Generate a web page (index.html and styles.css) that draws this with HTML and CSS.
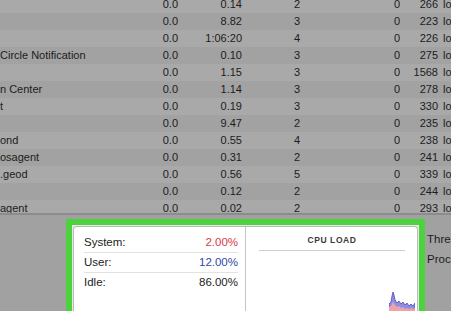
FILE: index.html
```html
<!DOCTYPE html>
<html lang="en">
<head>
  <meta charset="UTF-8" />
  <meta name="viewport" content="width=device-width, initial-scale=1.0" />
  <title>Activity Monitor</title>
  <link rel="stylesheet" href="styles.css">
</head>
<body>
  <div class="process-list">
    <div class="rows">
      <div class="row"><span class="name"></span><span class="cpu">0.0</span><span class="time">0.14</span><span class="threads">2</span><span class="wakes">0</span><span class="pid">266</span><span class="user">lo</span></div>
      <div class="row"><span class="name"></span><span class="cpu">0.0</span><span class="time">8.82</span><span class="threads">3</span><span class="wakes">0</span><span class="pid">223</span><span class="user">lo</span></div>
      <div class="row"><span class="name"></span><span class="cpu">0.0</span><span class="time">1:06:20</span><span class="threads">4</span><span class="wakes">0</span><span class="pid">226</span><span class="user">lo</span></div>
      <div class="row"><span class="name">Circle Notification</span><span class="cpu">0.0</span><span class="time">0.10</span><span class="threads">3</span><span class="wakes">0</span><span class="pid">275</span><span class="user">lo</span></div>
      <div class="row"><span class="name"></span><span class="cpu">0.0</span><span class="time">1.15</span><span class="threads">3</span><span class="wakes">0</span><span class="pid">1568</span><span class="user">lo</span></div>
      <div class="row"><span class="name">n Center</span><span class="cpu">0.0</span><span class="time">1.14</span><span class="threads">3</span><span class="wakes">0</span><span class="pid">278</span><span class="user">lo</span></div>
      <div class="row"><span class="name">t</span><span class="cpu">0.0</span><span class="time">0.19</span><span class="threads">3</span><span class="wakes">0</span><span class="pid">330</span><span class="user">lo</span></div>
      <div class="row"><span class="name"></span><span class="cpu">0.0</span><span class="time">9.47</span><span class="threads">2</span><span class="wakes">0</span><span class="pid">235</span><span class="user">lo</span></div>
      <div class="row"><span class="name">ond</span><span class="cpu">0.0</span><span class="time">0.55</span><span class="threads">4</span><span class="wakes">0</span><span class="pid">238</span><span class="user">lo</span></div>
      <div class="row"><span class="name">osagent</span><span class="cpu">0.0</span><span class="time">0.31</span><span class="threads">2</span><span class="wakes">0</span><span class="pid">241</span><span class="user">lo</span></div>
      <div class="row"><span class="name">.geod</span><span class="cpu">0.0</span><span class="time">0.56</span><span class="threads">5</span><span class="wakes">0</span><span class="pid">339</span><span class="user">lo</span></div>
      <div class="row"><span class="name"></span><span class="cpu">0.0</span><span class="time">0.12</span><span class="threads">2</span><span class="wakes">0</span><span class="pid">244</span><span class="user">lo</span></div>
      <div class="row"><span class="name">agent</span><span class="cpu">0.0</span><span class="time">0.02</span><span class="threads">2</span><span class="wakes">0</span><span class="pid">293</span><span class="user">lo</span></div>
    </div>
  </div>

  <div class="bottom">
    <div class="highlight">
      <div class="panel">
        <div class="load-stats">
          <div class="stat"><span>System:</span><span class="val system">2.00%</span></div>
          <div class="stat"><span>User:</span><span class="val user-load">12.00%</span></div>
          <div class="stat"><span>Idle:</span><span class="val">86.00%</span></div>
        </div>
        <div class="load-graph">
          <div class="graph-title">CPU LOAD</div>
          <svg class="graph" width="26" height="22" viewBox="0 0 26 22">
            <path d="M0 22 L0 14 L2 12 L3 6 L4 2 L5 5 L6 10 L8 13 L10 11 L12 14 L14 12 L16 15 L18 13 L20 16 L22 14 L24 16 L26 13 L26 22 Z" fill="#8e8ee0" stroke="#4a4ab8" stroke-width="0.8"/>
            <path d="M0 22 L0 17 L2 16 L4 12 L6 15 L8 17 L10 16 L12 18 L14 17 L16 19 L18 18 L20 19 L22 18 L24 19 L26 18 L26 22 Z" fill="#f0a2ac"/>
          </svg>
        </div>
      </div>
    </div>
    <div class="side-stats">
      <div>Threads:</div>
      <div>Processes:</div>
    </div>
  </div>
</body>
</html>
```

FILE: styles.css
```css
body {
  margin: 0;
  width: 451px;
  height: 311px;
  overflow: hidden;
  background: #a1a1a1;
  font-family: "Liberation Sans", Arial, sans-serif;
  color: #1c1c1c;
}

.process-list {
  height: 213px;
  overflow: hidden;
  border-bottom: 2px solid #8c8c8c;
}

.rows {
  margin-top: -4px;
}

.row {
  display: grid;
  grid-template-columns: 150px 28px 64px 110px 48px 38px 1fr;
  height: 17px;
  line-height: 17px;
  font-size: 11px;
  white-space: nowrap;
  background: #a9a9a9;
}

.row:nth-child(even) {
  background: #a2a2a2;
}

.name {
  overflow: hidden;
}

.cpu,
.time,
.wakes,
.pid {
  text-align: right;
}

.threads {
  text-align: center;
}

.user {
  padding-left: 5px;
  overflow: hidden;
}

.bottom {
  display: flex;
  padding-top: 4px;
  padding-left: 66px;
}

.highlight {
  flex-shrink: 0;
  width: 345px;
  height: 86px;
  border: 6px solid #4cd23c;
  border-bottom: none;
  padding: 1px 1px 0 1px;
  background: #e6e8e6;
}

.panel {
  display: flex;
  height: 100%;
  background: #fff;
  border: 1px solid #b9b9b9;
  border-bottom: none;
  border-radius: 4px 4px 0 0;
  box-sizing: border-box;
}

.load-stats {
  width: 172px;
  padding: 6px 7px 0 10px;
  box-sizing: border-box;
  border-right: 1px solid #c4c4c4;
  font-size: 11.5px;
}

.stat {
  display: flex;
  justify-content: space-between;
  height: 19px;
  line-height: 19px;
  border-bottom: 1px solid #e2e2e2;
}

.stat:last-child {
  border-bottom: none;
}

.val.system {
  color: #d63a48;
}

.val.user-load {
  color: #2d4aa8;
}

.load-graph {
  position: relative;
  flex: 1;
  padding: 8px 12px 0 13px;
}

.graph-title {
  text-align: center;
  font-size: 8.5px;
  font-weight: bold;
  letter-spacing: 0.6px;
  color: #3a3a3a;
  padding-bottom: 5px;
  border-bottom: 1px solid #d0d0d0;
}

.graph {
  position: absolute;
  right: 2px;
  bottom: 0;
}

.side-stats {
  padding: 10px 0 0 2px;
  font-size: 11.5px;
  line-height: 20px;
  white-space: nowrap;
}
```
